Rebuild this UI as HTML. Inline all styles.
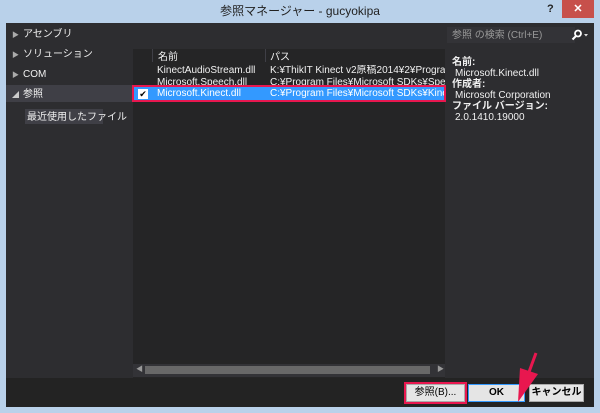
<!DOCTYPE html>
<html><head><meta charset="utf-8"><style>
*{margin:0;padding:0;box-sizing:border-box}
body{width:600px;height:413px;background:#b9d1ea;position:relative;overflow:hidden;font-family:"Liberation Sans","Noto Sans CJK JP",sans-serif;font-size:10px;line-height:12px;color:#f1f1f1}
.a{position:absolute;white-space:nowrap}
.t{margin-top:2px}
</style></head><body>
<div class="a" style="left:0;top:0;width:600px;height:23px;background:#b9d1ea"></div>
<div class="a" style="left:0;top:4px;width:600px;text-align:center;color:#222;font-size:12px;line-height:14px">参照マネージャー - gucyokipa</div>
<div class="a" style="left:547px;top:3px;color:#222;font-size:11px;font-weight:bold">?</div>
<div class="a" style="left:562px;top:0;width:32px;height:18px;background:#c7504b;color:#fff;text-align:center;font-size:11px;line-height:18px;font-weight:bold">✕</div>
<div class="a" style="left:6px;top:23px;width:588px;height:384px;background:#252526"></div>
<div class="a" style="left:6px;top:23px;width:127px;height:355px;background:#2d2d30"></div>
<div class="a" style="left:445px;top:23px;width:149px;height:355px;background:#2d2d30"></div>
<div class="a" style="left:133px;top:23px;width:312px;height:26px;background:#2d2d30"></div>
<div class="a" style="left:6px;top:378px;width:588px;height:29px;background:#232323"></div>
<div class="a" style="left:6px;top:85px;width:127px;height:17px;background:#3f3f46"></div>
<div class="a t" style="left:12px;top:28px;font-size:7px;color:#aaa">▶</div><div class="a t" style="left:23px;top:27px">アセンブリ</div>
<div class="a t" style="left:12px;top:48px;font-size:7px;color:#aaa">▶</div><div class="a t" style="left:23px;top:47px">ソリューション</div>
<div class="a t" style="left:12px;top:68px;font-size:7px;color:#aaa">▶</div><div class="a t" style="left:23px;top:67px">COM</div>
<div class="a t" style="left:12px;top:88px;font-size:7px;color:#ccc">◢</div><div class="a t" style="left:23px;top:87px">参照</div>
<div class="a" style="left:25px;top:109px;width:78px;height:15px;background:#3f3f46"></div>
<div class="a t" style="left:27px;top:110px">最近使用したファイル</div>
<div class="a" style="left:152px;top:49px;width:1px;height:13px;background:#3f3f46"></div>
<div class="a" style="left:265px;top:49px;width:1px;height:13px;background:#3f3f46"></div>
<div class="a t" style="left:158px;top:50px">名前</div><div class="a t" style="left:270px;top:50px">パス</div>
<div class="a t" style="left:157px;top:63px">KinectAudioStream.dll</div><div class="a t" style="left:270px;top:63px;width:175px;overflow:hidden">K:¥ThikIT Kinect v2原稿2014¥2¥Program</div>
<div class="a t" style="left:157px;top:75px;height:10px;overflow:hidden">Microsoft.Speech.dll</div><div class="a t" style="left:270px;top:75px;height:10px;overflow:hidden;width:175px">C:¥Program Files¥Microsoft SDKs¥Speech</div>
<div class="a" style="left:132px;top:85px;width:314px;height:17px;border:2px solid #e8174f"></div>
<div class="a" style="left:134px;top:87px;width:310px;height:13px;background:#3399ff"></div>
<div class="a" style="left:138px;top:89px;width:10px;height:10px;background:#fff;color:#000;font-size:9px;line-height:10px;text-align:center">✔</div>
<div class="a" style="left:157px;top:88px;color:#fff">Microsoft.Kinect.dll</div><div class="a" style="left:270px;top:88px;color:#fff;width:174px;overflow:hidden">C:¥Program Files¥Microsoft SDKs¥Kinect</div>
<div class="a" style="left:133px;top:364px;width:312px;height:13px;background:#333337"></div>
<div class="a" style="left:145px;top:366px;width:285px;height:8px;background:#686868"></div>
<div class="a" style="left:136px;top:364px;font-size:7px;color:#999">◀</div><div class="a" style="left:437px;top:364px;font-size:7px;color:#999">▶</div>
<div class="a" style="left:447px;top:27px;width:128px;height:16px;background:#333337"></div>
<div class="a t" style="left:452px;top:28px;color:#999">参照 の検索 (Ctrl+E)</div>
<svg class="a" style="left:570px;top:29px" width="20" height="12"><circle cx="8" cy="4.5" r="3" stroke="#fff" stroke-width="1.8" fill="none"/><path d="M6 7 L2.5 10.5" stroke="#fff" stroke-width="2"/><path d="M14 5 L18 5 L16 7.5Z" fill="#ddd"/></svg>
<div class="a t" style="left:452px;top:55px;font-weight:bold">名前:</div>
<div class="a t" style="left:455px;top:66px">Microsoft.Kinect.dll</div>
<div class="a t" style="left:452px;top:77px;font-weight:bold">作成者:</div>
<div class="a t" style="left:455px;top:88px">Microsoft Corporation</div>
<div class="a t" style="left:452px;top:99px;font-weight:bold">ファイル バージョン:</div>
<div class="a t" style="left:455px;top:110px">2.0.1410.19000</div>
<div class="a" style="left:404px;top:382px;width:63px;height:22px;border:2px solid #e8174f"></div>
<div class="a" style="left:406px;top:384px;width:59px;height:18px;background:#e5e5e5;border:1px solid #aaa;color:#000;text-align:center;line-height:16px">参照(B)...</div>
<div class="a" style="left:468px;top:384px;width:57px;height:18px;background:#e5e5e5;border:1px solid #3399ff;color:#000;text-align:center;line-height:16px;font-weight:bold">OK</div>
<div class="a" style="left:529px;top:384px;width:55px;height:18px;background:#e5e5e5;border:1px solid #aaa;color:#000;text-align:center;line-height:16px;font-weight:bold">キャンセル</div>
<svg class="a" style="left:505px;top:350px" width="40" height="55"><path d="M31 3 L24 22" stroke="#e8174f" stroke-width="3"/><path d="M15 18 L33 24 L13 52 Z" fill="#e8174f"/></svg>
</body></html>
